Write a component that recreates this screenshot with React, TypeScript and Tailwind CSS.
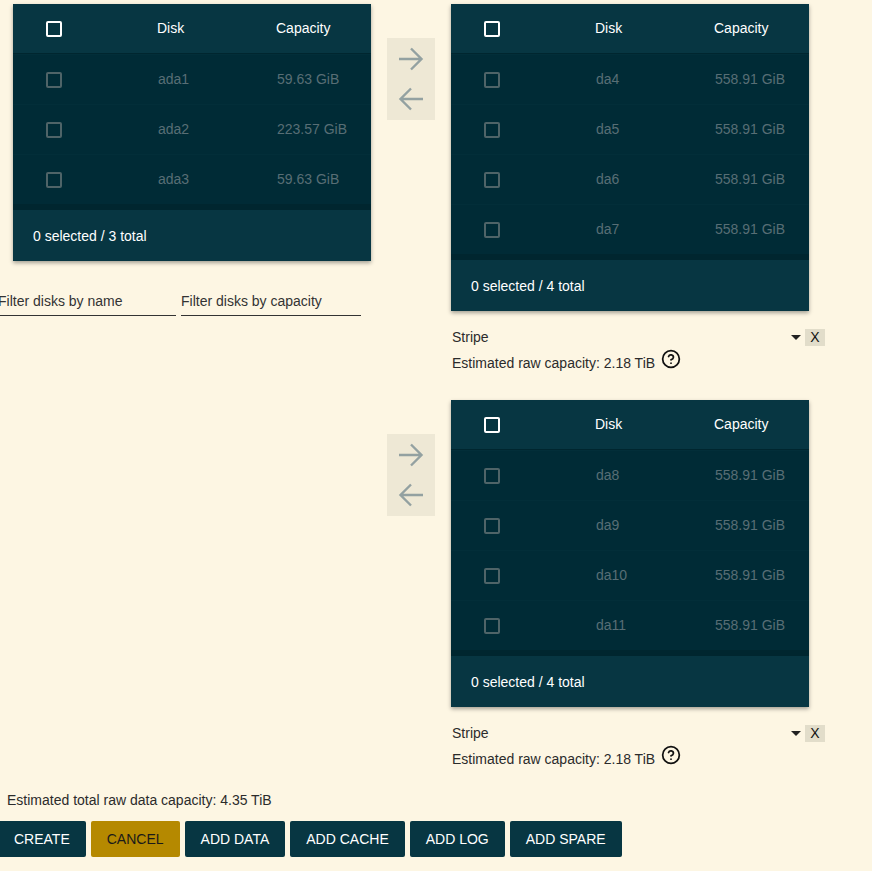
import { CircleHelp } from 'lucide-react';

interface Disk {
  name: string;
  size: string;
}

const AVAILABLE: Disk[] = [
  { name: 'ada1', size: '59.63 GiB' },
  { name: 'ada2', size: '223.57 GiB' },
  { name: 'ada3', size: '59.63 GiB' },
];

const VDEV_1: Disk[] = ['da4', 'da5', 'da6', 'da7'].map((name) => ({ name, size: '558.91 GiB' }));
const VDEV_2: Disk[] = ['da8', 'da9', 'da10', 'da11'].map((name) => ({ name, size: '558.91 GiB' }));

function Box({ light }: { light?: boolean }) {
  return (
    <span
      className={`block w-4 h-4 rounded-[2px] border-2 ${
        light ? 'border-white' : 'border-[#4f6468]'
      }`}
    />
  );
}

function DiskTable({ disks }: { disks: Disk[] }) {
  return (
    <div className="w-[358px] shadow-[0_2px_4px_rgba(0,0,0,0.35)]">
      {/* Header */}
      <div className="h-[49px] bg-[#073642] grid grid-cols-[144px_119px_1fr] items-center text-white">
        <div className="pl-[33px]">
          <Box light />
        </div>
        <div>Disk</div>
        <div>Capacity</div>
      </div>

      {/* Rows */}
      <div className="bg-[#00262f] pt-px pb-[6px]">
        {disks.map((d) => (
          <div
            key={d.name}
            className="h-[50px] border-t border-[#022e39] bg-[#002b36] grid grid-cols-[144px_119px_1fr] items-center text-[#586e75]"
          >
            <div className="pl-[33px]">
              <Box />
            </div>
            <div className="pl-px">{d.name}</div>
            <div className="pl-px">{d.size}</div>
          </div>
        ))}
      </div>

      {/* Footer */}
      <div className="h-[51px] bg-[#073642] flex items-center pl-5 pt-[2px] text-white">
        0 selected / {disks.length} total
      </div>
    </div>
  );
}

function Arrows() {
  return (
    <div className="mt-[34px] w-12 h-[82px] bg-[#eee8d5] flex flex-col items-center justify-center gap-4 text-[#93a1a1]">
      <svg width="26" height="24" viewBox="0 0 26 24" fill="none" stroke="currentColor" strokeWidth="2.4">
        <path d="M1 12h23M13 1.5l10.5 10.5L13 22.5" />
      </svg>
      <svg width="26" height="24" viewBox="0 0 26 24" fill="none" stroke="currentColor" strokeWidth="2.4">
        <path d="M25 12H2M13 1.5L2.5 12 13 22.5" />
      </svg>
    </div>
  );
}

function Vdev({ disks }: { disks: Disk[] }) {
  return (
    <div className="flex gap-4">
      <Arrows />
      <div>
        <DiskTable disks={disks} />
        <div className="mt-[18px] w-[374px] h-[17px] flex items-center text-[#2b2b2b]">
          <span className="flex-1 pl-px">Stripe</span>
          <span className="w-0 h-0 border-l-[5px] border-r-[5px] border-t-[5px] border-l-transparent border-r-transparent border-t-[#222] mr-1" />
          <span className="w-5 h-[17px] bg-[#e2ddca] flex items-center justify-center text-[14px] text-[#111]">X</span>
        </div>
        <div className="mt-[6px] flex items-start text-[#2b2b2b] h-5 leading-5">
          <span className="mt-[1px] pl-px">Estimated raw capacity: 2.18 TiB</span>
          <CircleHelp className="ml-[6px] -mt-[3px] text-[#111]" size={20} strokeWidth={2.1} />
        </div>
      </div>
    </div>
  );
}

export default function App() {
  return (
    <div className="min-h-[871px] bg-[#fdf6e3] text-[14px] font-['Liberation_Sans',Arial,sans-serif] overflow-hidden">
      <div className="flex pt-1">
        {/* Available disks */}
        <div className="w-[371px] shrink-0">
          <div className="ml-[13px]">
            <DiskTable disks={AVAILABLE} />
          </div>
          <div className="mt-[25px] flex gap-[5px] text-[#333]">
            <div className="w-[176px] h-[30px] border-b border-[#333] flex items-center pt-[2px] -indent-[2px]">
              Filter disks by name
            </div>
            <div className="w-[180px] h-[30px] border-b border-[#333] flex items-center pt-[2px]">
              Filter disks by capacity
            </div>
          </div>
        </div>

        {/* Vdevs */}
        <div className="ml-4 flex flex-col gap-[28px]">
          <Vdev disks={VDEV_1} />
          <Vdev disks={VDEV_2} />
        </div>
      </div>

      {/* Totals & actions */}
      <div className="mt-[22px] pl-[7px] h-5 leading-5 text-[#2b2b2b]">
        Estimated total raw data capacity: 4.35 TiB
      </div>
      <div className="mt-[11px] -ml-[2px] flex gap-[5px]">
        {['CREATE', 'CANCEL', 'ADD DATA', 'ADD CACHE', 'ADD LOG', 'ADD SPARE'].map((label) => (
          <button
            key={label}
            className={`h-9 px-4 rounded-[2px] ${
              label === 'CANCEL' ? 'bg-[#b58900] text-[#1a1a1a]' : 'bg-[#073642] text-white'
            }`}
          >
            {label}
          </button>
        ))}
      </div>
    </div>
  );
}
